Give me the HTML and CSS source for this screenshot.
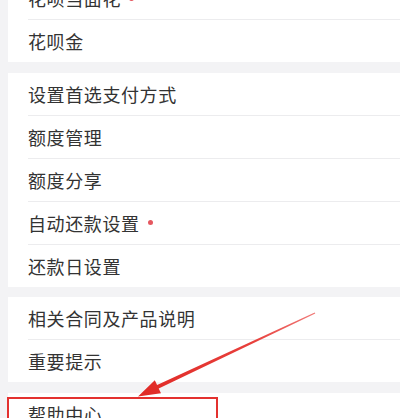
FILE: index.html
```html
<!DOCTYPE html>
<html lang="zh-CN">
<head>
<meta charset="utf-8">
<title>花呗设置</title>
<link rel="stylesheet" href="styles.css">
</head>
<body>
<div class="page">
  <div class="list">
    <div class="group first">
      <div class="row"><span class="label">花呗当面花</span><span class="dot"></span></div>
      <div class="row"><span class="label">花呗金</span></div>
    </div>
    <div class="group">
      <div class="row"><span class="label">设置首选支付方式</span></div>
      <div class="row"><span class="label">额度管理</span></div>
      <div class="row"><span class="label">额度分享</span></div>
      <div class="row"><span class="label">自动还款设置</span><span class="dot"></span><span class="value">已开启</span></div>
      <div class="row"><span class="label">还款日设置</span></div>
    </div>
    <div class="group">
      <div class="row"><span class="label">相关合同及产品说明</span></div>
      <div class="row"><span class="label">重要提示</span></div>
    </div>
    <div class="group">
      <div class="row highlight"><span class="label">帮助中心</span><span class="mark"></span></div>
    </div>
  </div>
  <svg class="arrow" width="400" height="418" viewBox="0 0 400 418" aria-hidden="true">
    <defs>
      <linearGradient id="ag" x1="315" y1="313" x2="138" y2="396" gradientUnits="userSpaceOnUse">
        <stop offset="0" stop-color="#f07a78"/>
        <stop offset="0.35" stop-color="#e8403c"/>
        <stop offset="1" stop-color="#e02a26"/>
      </linearGradient>
    </defs>
    <polygon fill="url(#ag)" points="315.3,313.5 158.7,388.5 161,393.2 138,396.5 154.8,380.2 157.1,384.9 314.7,312.5"/>
  </svg>
</div>
</body>
</html>
```
FILE: styles.css
```css
html, body {
  margin: 0;
  padding: 0;
  overflow: hidden;
  background: #f3f3f5;
}
.page {
  position: relative;
  width: 400px;
  height: 418px;
  overflow: hidden;
}
.list {
  display: flex;
  flex-direction: column;
  gap: 10.5px;
  width: 452px;
  margin-top: -23px;
  margin-left: 8px;
  font-family: "Noto Sans CJK SC", "Noto Sans", sans-serif;
}
.group {
  background: #ffffff;
  padding-left: 20px;
}
.row {
  position: relative;
  display: flex;
  align-items: center;
  height: 43px;
  box-sizing: border-box;
  border-bottom: 1px solid #ececee;
  padding-right: 12px;
}
.row:last-child {
  border-bottom: none;
  height: 42px;
}
.label {
  font-size: 18px;
  letter-spacing: 0.6px;
  color: #333333;
  line-height: 1;
}
.dot {
  width: 5px;
  height: 5px;
  border-radius: 50%;
  background: #e5575f;
  margin-left: 8px;
}
.value {
  margin-left: auto;
  font-size: 14px;
  color: #b5b5b5;
}
.mark {
  position: absolute;
  left: -21px;
  top: 4px;
  width: 207px;
  height: 60px;
  border: 2px solid #e3312f;
}
.arrow {
  position: absolute;
  left: 0;
  top: 0;
}
```
